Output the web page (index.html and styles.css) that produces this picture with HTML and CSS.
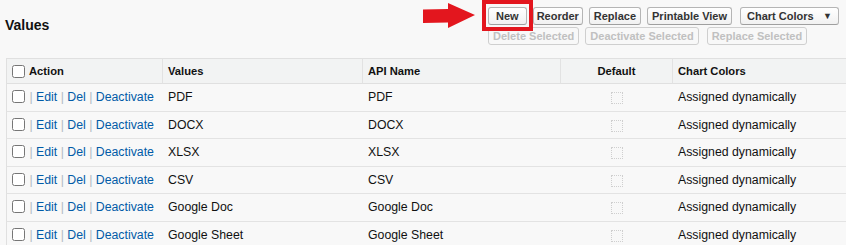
FILE: index.html
```html
<!DOCTYPE html>
<html>
<head>
<meta charset="utf-8">
<link rel="stylesheet" href="styles.css">
</head>
<body>
<div class="page">
  <div class="head">
    <h2 class="title">Values</h2>
    <div class="buttons">
      <div class="btn-row">
        <button class="btn btn-new">New</button>
        <button class="btn btn-tight">Reorder</button>
        <button class="btn">Replace</button>
        <button class="btn">Printable View</button>
        <div class="btn select wide-gap"><span>Chart Colors</span><span class="caret">▼</span></div>
      </div>
      <div class="btn-row">
        <button class="btn disabled">Delete Selected</button>
        <button class="btn disabled">Deactivate Selected</button>
        <button class="btn disabled wide-gap">Replace Selected</button>
      </div>
    </div>
  </div>

  <table class="grid">
    <colgroup>
      <col class="c-action">
      <col class="c-values">
      <col class="c-api">
      <col class="c-default">
      <col class="c-colors">
    </colgroup>
    <thead>
      <tr>
        <th class="first"><span class="cellflex"><input type="checkbox" class="cb"><span class="hlabel">Action</span></span></th>
        <th>Values</th>
        <th>API Name</th>
        <th class="center">Default</th>
        <th>Chart Colors</th>
      </tr>
    </thead>
    <tbody>
      <tr>
        <td class="first"><input type="checkbox" class="cb"> <span class="pipe">|</span> <a>Edit</a> <span class="pipe">|</span> <a>Del</a> <span class="pipe">|</span> <a>Deactivate</a></td>
        <td>PDF</td><td>PDF</td><td class="center"><span class="dot-box"></span></td><td>Assigned dynamically</td>
      </tr>
      <tr>
        <td class="first"><input type="checkbox" class="cb"> <span class="pipe">|</span> <a>Edit</a> <span class="pipe">|</span> <a>Del</a> <span class="pipe">|</span> <a>Deactivate</a></td>
        <td>DOCX</td><td>DOCX</td><td class="center"><span class="dot-box"></span></td><td>Assigned dynamically</td>
      </tr>
      <tr>
        <td class="first"><input type="checkbox" class="cb"> <span class="pipe">|</span> <a>Edit</a> <span class="pipe">|</span> <a>Del</a> <span class="pipe">|</span> <a>Deactivate</a></td>
        <td>XLSX</td><td>XLSX</td><td class="center"><span class="dot-box"></span></td><td>Assigned dynamically</td>
      </tr>
      <tr>
        <td class="first"><input type="checkbox" class="cb"> <span class="pipe">|</span> <a>Edit</a> <span class="pipe">|</span> <a>Del</a> <span class="pipe">|</span> <a>Deactivate</a></td>
        <td>CSV</td><td>CSV</td><td class="center"><span class="dot-box"></span></td><td>Assigned dynamically</td>
      </tr>
      <tr>
        <td class="first"><input type="checkbox" class="cb"> <span class="pipe">|</span> <a>Edit</a> <span class="pipe">|</span> <a>Del</a> <span class="pipe">|</span> <a>Deactivate</a></td>
        <td>Google Doc</td><td>Google Doc</td><td class="center"><span class="dot-box"></span></td><td>Assigned dynamically</td>
      </tr>
      <tr>
        <td class="first"><input type="checkbox" class="cb"> <span class="pipe">|</span> <a>Edit</a> <span class="pipe">|</span> <a>Del</a> <span class="pipe">|</span> <a>Deactivate</a></td>
        <td>Google Sheet</td><td>Google Sheet</td><td class="center"><span class="dot-box"></span></td><td>Assigned dynamically</td>
      </tr>
    </tbody>
  </table>

  <svg class="arrow" width="60" height="32" viewBox="0 0 60 32" aria-hidden="true">
    <polygon points="3,9.5 28,9 28,3 55,15 28,28 28,22.5 3,23" fill="#e3161e"/>
  </svg>
  <div class="highlight"></div>
</div>
</body>
</html>
```

FILE: styles.css
```css
html, body {
  margin: 0;
  padding: 0;
  background: #f8f8f8;
}

body {
  font-family: "Liberation Sans", Arial, sans-serif;
  color: #111;
  overflow: hidden;
}

.page {
  position: relative;
  width: 846px;
  height: 245px;
}

.head {
  display: flex;
  height: 58px;
}

.title {
  margin: 0;
  width: 483px;
  padding: 17px 0 0 5px;
  font-size: 14px;
  line-height: 16px;
  font-weight: bold;
  color: #111;
}

.buttons {
  padding-top: 7px;
  display: flex;
  flex-direction: column;
  gap: 2px;
}

.btn-row {
  display: flex;
  gap: 6px;
}

.btn {
  box-sizing: border-box;
  height: 18px;
  margin: 0;
  padding: 0 4px;
  border: 1px solid #b5b5b5;
  border-bottom-color: #9f9f9f;
  border-radius: 3px;
  background: linear-gradient(#ffffff, #f1f1f1);
  font-family: "Liberation Sans", Arial, sans-serif;
  font-size: 11px;
  font-weight: bold;
  line-height: 16px;
  color: #333;
  white-space: nowrap;
}

.btn-new {
  padding: 0 7px;
}

.btn-tight {
  padding: 0 3px;
}

.wide-gap {
  margin-left: 2px;
}

.select {
  display: flex;
  justify-content: space-between;
  align-items: center;
  width: 99px;
  padding: 0 6px 0 6px;
}

.caret {
  font-size: 9px;
  line-height: 16px;
  color: #333;
}

.btn.disabled {
  color: #c0c0c0;
  border-color: #cfcfcf;
  background: #f8f8f8;
}

.grid {
  margin-left: 6px;
  width: 840px;
  table-layout: fixed;
  border-collapse: separate;
  border-spacing: 0;
}

.c-action { width: 156px; }
.c-values { width: 200px; }
.c-api { width: 198px; }
.c-default { width: 112px; }
.c-colors { width: 174px; }

.grid th {
  box-sizing: border-box;
  height: 26px;
  padding: 0 5px;
  background: #f2f3f3;
  border-top: 1px solid #e0e0e0;
  border-bottom: 1px solid #e0e0e0;
  border-left: 1px solid #e2e2e2;
  font-size: 11.2px;
  font-weight: bold;
  text-align: left;
  color: #111;
  white-space: nowrap;
}

.grid td {
  box-sizing: border-box;
  height: 27.5px;
  padding: 0 5px;
  border-bottom: 1px solid #e3e3e3;
  font-size: 12.3px;
  white-space: nowrap;
  vertical-align: middle;
}

.grid td:not(.first) {
  padding-left: 6px;
}

.grid .first {
  border-left: 1px solid #e0e0e0;
}

.grid .center {
  text-align: center;
}

.cellflex {
  display: flex;
  align-items: center;
  gap: 4px;
}

.cb {
  width: 13px;
  height: 13px;
  margin: 0 1px 0 0;
  vertical-align: -2px;
}

.cellflex .cb {
  margin: 0;
}

.pipe {
  color: #b1bac3;
}

a {
  color: #015ba7;
  text-decoration: none;
}

.dot-box {
  display: inline-block;
  box-sizing: border-box;
  width: 12px;
  height: 12px;
  border: 1px dotted #cfcfcf;
  vertical-align: middle;
}

.arrow {
  position: absolute;
  left: 420px;
  top: 0;
}

.highlight {
  position: absolute;
  left: 482px;
  top: 0;
  width: 51px;
  height: 31px;
  box-sizing: border-box;
  border: 4px solid #e3161e;
}
```
